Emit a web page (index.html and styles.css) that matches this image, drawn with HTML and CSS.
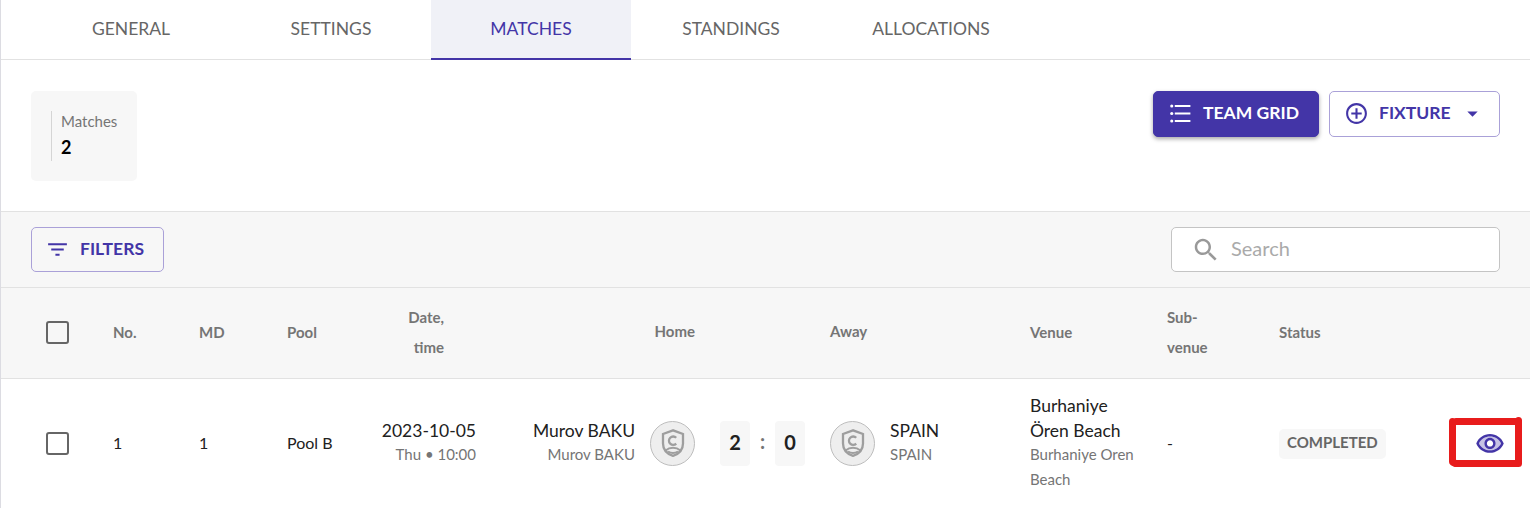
FILE: index.html
```html
<!DOCTYPE html>
<html lang="en">
<head>
  <meta charset="UTF-8">
  <meta name="viewport" content="width=device-width, initial-scale=1.0">
  <title>Matches</title>
  <link rel="stylesheet" href="styles.css">
</head>
<body>
  <div class="page">
    <nav class="tabs">
      <a class="tab">GENERAL</a>
      <a class="tab">SETTINGS</a>
      <a class="tab active">MATCHES</a>
      <a class="tab">STANDINGS</a>
      <a class="tab">ALLOCATIONS</a>
    </nav>

    <section class="summary">
      <div class="stat-card">
        <div class="stat">
          <span class="stat-label">Matches</span>
          <span class="stat-value">2</span>
        </div>
      </div>
      <div class="actions">
        <button class="btn btn-primary">
          <svg width="25" height="25" viewBox="0 0 24 24" fill="currentColor">
            <circle cx="3.6" cy="4.800" r="1.500"/><circle cx="3.6" cy="12" r="1.500"/><circle cx="3.6" cy="19.200" r="1.500"/>
            <path d="M6.500 3.800H21.500v2H6.500zM6.500 11H21.500v2H6.500zM6.500 18.200H21.500v2H6.500z"/>
          </svg>
          TEAM GRID
        </button>
        <button class="btn btn-fixture">
          <svg width="25" height="25" viewBox="0 0 24 24" fill="currentColor">
            <path d="M13 7h-2v4H7v2h4v4h2v-4h4v-2h-4V7zm-1-5C6.480 2 2 6.480 2 12s4.480 10 10 10 10-4.480 10-10S17.520 2 12 2zm0 18c-4.410 0-8-3.590-8-8s3.590-8 8-8 8 3.590 8 8-3.590 8-8 8z"/>
          </svg>
          FIXTURE
          <svg class="caret" width="25" height="25" viewBox="0 0 24 24" fill="currentColor"><path d="M7 10l5 5 5-5z"/></svg>
        </button>
      </div>
    </section>

    <section class="toolbar">
      <button class="btn btn-filters">
        <svg width="25" height="25" viewBox="0 0 24 24" fill="currentColor"><path d="M10 18h4v-2h-4v2zM3 6v2h18V6H3zm3 7h12v-2H6v2z"/></svg>
        FILTERS
      </button>
      <label class="search">
        <svg width="30" height="30" viewBox="0 0 24 24" fill="currentColor"><path d="M15.500 14h-.79l-.28-.27C15.410 12.590 16 11.110 16 9.500 16 5.910 13.090 3 9.500 3S3 5.910 3 9.500 5.910 16 9.500 16c1.610 0 3.090-.59 4.230-1.570l.27.28v.79l5 4.990L20.490 19l-4.990-5zm-6 0C7.010 14 5 11.990 5 9.500S7.010 5 9.500 5 14 7.010 14 9.500 11.990 14 9.500 14z"/></svg>
        <input type="text" placeholder="Search">
      </label>
    </section>

    <div class="row head">
      <span class="checkbox"></span>
      <span>No.</span>
      <span>MD</span>
      <span>Pool</span>
      <span class="head-date">Date,<br>time</span>
      <span class="head-home">Home</span>
      <span></span>
      <span class="head-away">Away</span>
      <span>Venue</span>
      <span>Sub-<br>venue</span>
      <span>Status</span>
      <span></span>
    </div>

    <div class="row match">
      <span class="checkbox"></span>
      <span class="small">1</span>
      <span class="small">1</span>
      <span class="small">Pool B</span>
      <div class="cell right">
        <span class="main">2023-10-05</span>
        <span class="sub">Thu • 10:00</span>
      </div>
      <div class="team home">
        <div class="cell right">
          <span class="main">Murov BAKU</span>
          <span class="sub">Murov BAKU</span>
        </div>
        <div class="avatar">
          <svg width="30" height="30" viewBox="0 0 30 30" fill="none" stroke="#9e9e9e" stroke-width="2.300">
            <path d="M15 2.300L5 6v9.500c0 5.800 3.700 10.300 10 12.400 6.300-2.100 10-6.600 10-12.400V6z"/>
            <path d="M18.200 9.800a4.200 4.200 0 1 0 0 5.800"/>
            <path d="M7.500 22.500c4.500-3.600 10.500-3.600 15 0M10 23.500c3 1.900 7 1.900 10 0" stroke-width="1.900"/>
          </svg>
        </div>
      </div>
      <div class="score">
        <span class="goals">2</span>
        <span class="colon">:</span>
        <span class="goals">0</span>
      </div>
      <div class="team">
        <div class="avatar">
          <svg width="30" height="30" viewBox="0 0 30 30" fill="none" stroke="#9e9e9e" stroke-width="2.300">
            <path d="M15 2.300L5 6v9.500c0 5.800 3.700 10.300 10 12.400 6.300-2.100 10-6.600 10-12.400V6z"/>
            <path d="M18.200 9.800a4.200 4.200 0 1 0 0 5.800"/>
            <path d="M7.500 22.500c4.500-3.600 10.500-3.600 15 0M10 23.500c3 1.900 7 1.900 10 0" stroke-width="1.900"/>
          </svg>
        </div>
        <div class="cell">
          <span class="main">SPAIN</span>
          <span class="sub">SPAIN</span>
        </div>
      </div>
      <div class="cell venue">
        <span class="main">Burhaniye Ören Beach</span>
        <span class="sub">Burhaniye Oren Beach</span>
      </div>
      <span class="small">-</span>
      <span><span class="status">COMPLETED</span></span>
      <div class="view">
        <svg width="30" height="30" viewBox="0 0 24 24" fill="#4335a7">
          <path fill-opacity=".3" d="M12 6c-3.790 0-7.170 2.130-8.820 5.500C4.830 14.870 8.210 17 12 17s7.170-2.130 8.820-5.500C19.170 8.130 15.790 6 12 6zm0 10c-2.480 0-4.500-2.020-4.500-4.500S9.520 7 12 7s4.500 2.020 4.500 4.500S14.480 16 12 16z"/>
          <path d="M12 4C7 4 2.730 7.110 1 11.500 2.730 15.890 7 19 12 19s9.270-3.110 11-7.500C21.270 7.110 17 4 12 4zm0 13c-3.790 0-7.170-2.130-8.820-5.500C4.830 8.130 8.210 6 12 6s7.170 2.130 8.820 5.500C19.170 14.870 15.790 17 12 17zm0-10c-2.480 0-4.500 2.020-4.500 4.500S9.520 16 12 16s4.500-2.020 4.500-4.500S14.480 7 12 7zm0 7c-1.380 0-2.500-1.120-2.500-2.500S10.620 9 12 9s2.500 1.120 2.500 2.500S13.380 14 12 14z"/>
        </svg>
        <!-- hand drawn marker around the view button -->
        <svg class="marker" width="76" height="54" viewBox="0 0 76 54" fill="none" stroke="#e81c1c" stroke-width="7" stroke-linecap="round" stroke-linejoin="round">
          <path d="M4.500 5.500V46L7.500 47.500H70.500V4.500M8 5.500H70.500"/>
        </svg>
      </div>
    </div>
  </div>
</body>
</html>
```
FILE: styles.css
```css
* {
  box-sizing: border-box;
}

body {
  margin: 0;
  height: 508px;
  overflow: hidden;
  background: #fff;
  color: #212121;
  font-family: Lato, "Liberation Sans", sans-serif;
  font-size: 16px;
}

.page {
  height: 508px;
  border-left: 1px solid #dcdce2;
}

/* tabs */
.tabs {
  display: flex;
  height: 60px;
  padding-left: 30px;
  border-bottom: 1px solid #e2e2e2;
}

.tab {
  width: 200px;
  height: 60px;
  line-height: 58px;
  text-align: center;
  font-size: 17.5px;
  color: #666;
}

.tab.active {
  background: #f0f1f7;
  color: #4335a7;
  border-bottom: 2px solid #4335a7;
}

/* summary */
.summary {
  display: flex;
  justify-content: space-between;
  align-items: flex-start;
  height: 151px;
  padding: 31px 30px 0;
}

.stat-card {
  width: 106px;
  height: 90px;
  padding: 20px;
  border-radius: 5px;
  background: #f7f7f7;
}

.stat {
  display: flex;
  flex-direction: column;
  height: 50px;
  padding-left: 9px;
  border-left: 1px solid #d5d5d5;
}

.stat-label {
  line-height: 20px;
  font-size: 15px;
  color: #757575;
}

.stat-value {
  line-height: 32px;
  font-size: 18px;
  font-weight: bold;
  color: #000;
}

.actions {
  display: flex;
  gap: 10px;
}

.btn {
  display: flex;
  align-items: center;
  height: 46px;
  padding: 0 0 3px 14px;
  border: 1px solid #aaa1d8;
  border-radius: 5px;
  background: transparent;
  color: #4335a7;
  font-family: inherit;
  font-size: 17.5px;
  font-weight: bold;
  gap: 10px;
}

.btn svg {
  flex: none;
  margin-top: 2px;
}

.btn-primary {
  width: 166px;
  border-color: #4335a7;
  background: #4335a7;
  color: #fff;
  box-shadow: 0 2px 4px rgba(0, 0, 0, 0.35);
}

.btn-fixture {
  width: 171px;
}

.btn-fixture .caret {
  margin-left: -1px;
}

/* toolbar */
.toolbar {
  display: flex;
  justify-content: space-between;
  align-items: center;
  height: 77px;
  padding: 0 30px;
  border-top: 1px solid #e2e2e2;
  border-bottom: 1px solid #e2e2e2;
  background: #f7f7f7;
}

.btn-filters {
  width: 133px;
  height: 45px;
  padding-left: 13px;
}

.search {
  display: flex;
  align-items: center;
  width: 329px;
  height: 45px;
  padding-left: 19px;
  border: 1px solid #c4c4c4;
  border-radius: 5px;
  background: #fff;
  color: #999;
  gap: 10px;
}

.search input {
  width: 240px;
  padding: 0 0 3px;
  border: none;
  outline: none;
  background: transparent;
  font-family: inherit;
  font-size: 20px;
}

.search input::placeholder {
  color: #aaa;
}

/* matches table */
.row {
  display: grid;
  grid-template-columns: 82px 86px 88px 88px 101px 219px 135px 200px 137px 112px 150px 71px;
  align-items: center;
  padding-left: 30px;
}

.head {
  height: 91px;
  border-bottom: 1px solid #e2e2e2;
  background: #f7f7f7;
  color: #757575;
  font-size: 15px;
  font-weight: bold;
  line-height: 30px;
}

.head span {
  margin-bottom: 3px;
}

.head-date {
  padding-right: 32px;
  text-align: right;
}

.head-home {
  text-align: right;
}

.head .head-home,
.head .head-away {
  margin-bottom: 4px;
}

.match {
  height: 129px;
}

.checkbox,
.head .checkbox {
  width: 23px;
  height: 23px;
  margin: 0 0 1px 15px;
  border: 2px solid #666;
  border-radius: 3px;
}

.cell {
  display: flex;
  flex-direction: column;
  padding-bottom: 2px;
  line-height: 25px;
}

.right {
  text-align: right;
}

.main {
  font-size: 17.5px;
}

.sub {
  margin-top: -1px;
  font-size: 15px;
  color: #757575;
}

.small {
  padding-bottom: 2px;
}

.venue {
  width: 110px;
}

.team {
  display: flex;
  align-items: center;
  gap: 15px;
}

.home {
  justify-content: flex-end;
}

.avatar {
  display: flex;
  align-items: center;
  justify-content: center;
  width: 45px;
  height: 45px;
  border: 1px solid #bdbdbd;
  border-radius: 50%;
  background: #eee;
}

.avatar svg {
  margin-bottom: 2px;
}

.score {
  display: flex;
  align-items: center;
  justify-content: center;
}

.goals {
  width: 30px;
  height: 45px;
  border-radius: 4px;
  background: #f7f7f7;
  line-height: 43px;
  text-align: center;
  font-size: 20px;
  font-weight: bold;
}

.colon {
  width: 25px;
  padding-bottom: 5px;
  text-align: center;
  font-size: 20px;
  font-weight: bold;
  color: #757575;
}

.status {
  display: inline-block;
  height: 30px;
  padding: 0 8px;
  border-radius: 5px;
  background: #f7f7f7;
  line-height: 27px;
  font-size: 15px;
  font-weight: bold;
  color: #666;
}

.view {
  position: relative;
  display: flex;
  justify-content: flex-end;
  margin-right: -5px;
}

.marker {
  position: absolute;
  top: -13px;
  left: 19px;
}
```
